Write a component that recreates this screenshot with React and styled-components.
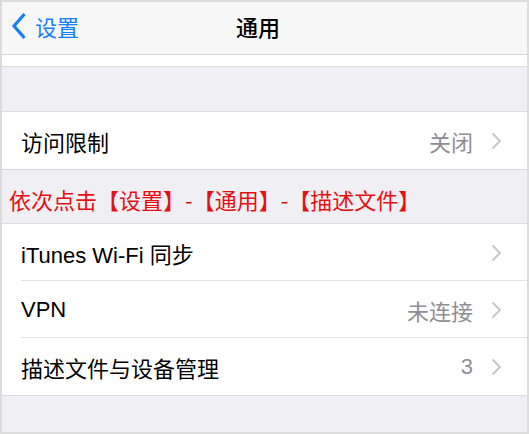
import React from "react";
import styled, { createGlobalStyle } from "styled-components";

const GlobalStyle = createGlobalStyle`
  html, body {
    margin: 0;
    padding: 0;
    background: #ffffff;
  }
  body {
    font-family: "Liberation Sans", "Noto Sans CJK SC", sans-serif;
  }
`;

const rows = [
  { label: "iTunes Wi-Fi 同步", value: "" },
  { label: "VPN", value: "未连接" },
  { label: "描述文件与设备管理", value: "3" },
];

export default function App() {
  return (
    <>
      <GlobalStyle />
      <Frame>
        <NavBar>
          <BackButton>
            <svg width="16" height="28" viewBox="0 0 16 28">
              <path
                d="M13.5 2 L3 14 L13.5 26"
                fill="none"
                stroke="#157efb"
                strokeWidth="3.2"
              />
            </svg>
            <span>设置</span>
          </BackButton>
          <Title>通用</Title>
          <NavSpacer />
        </NavBar>

        <ScrolledStrip />
        <SectionGap $height={44} />

        <Group>
          <Row>
            <Label>访问限制</Label>
            <Value>关闭</Value>
            <Chevron />
          </Row>
        </Group>

        <HintBand>依次点击【设置】-【通用】-【描述文件】</HintBand>

        <Group>
          {rows.map((row, i) => (
            <Row key={row.label} $divider={i < rows.length - 1}>
              <Label>{row.label}</Label>
              {row.value && <Value>{row.value}</Value>}
              <Chevron />
            </Row>
          ))}
        </Group>

        <SectionGap $fill />
      </Frame>
    </>
  );
}

function Chevron() {
  return (
    <ChevronIcon width="11" height="18" viewBox="0 0 11 18">
      <path d="M1.5 1.5 L9 9 L1.5 16.5" fill="none" stroke="#c7c7cc" strokeWidth="2" />
    </ChevronIcon>
  );
}

const Frame = styled.div`
  width: 529px;
  height: 434px;
  box-sizing: border-box;
  border: 2px solid #dcdcdc;
  background: #efeff4;
  display: flex;
  flex-direction: column;
  overflow: hidden;
`;

const NavBar = styled.div`
  height: 53px;
  box-sizing: border-box;
  padding-bottom: 5px;
  flex-shrink: 0;
  background: #f7f7f7;
  border-bottom: 1px solid #d4d4d4;
  display: grid;
  grid-template-columns: 1fr auto 1fr;
  align-items: center;
`;

const BackButton = styled.div`
  display: flex;
  align-items: center;
  gap: 8px;
  padding-left: 9px;
  color: #157efb;
  font-family: "Noto Sans CJK SC", sans-serif;
  font-size: 22px;
  svg {
    display: block;
  }
`;

const Title = styled.div`
  font-family: "Noto Sans CJK SC", sans-serif;
  font-size: 22px;
  font-weight: 500;
  color: #000;
  margin-right: 13px;
`;

const NavSpacer = styled.div``;

const ScrolledStrip = styled.div`
  height: 11px;
  flex-shrink: 0;
  background: #fff;
  border-bottom: 1px solid #dcdce0;
`;

const SectionGap = styled.div`
  flex-shrink: 0;
  height: ${(p) => (p.$height ? `${p.$height}px` : "auto")};
  flex-grow: ${(p) => (p.$fill ? 1 : 0)};
  background: #efeff4;
`;

const Group = styled.div`
  flex-shrink: 0;
  background: #fff;
  border-top: 1px solid #dcdce0;
  border-bottom: 1px solid #dcdce0;
`;

const Row = styled.div`
  height: 57px;
  box-sizing: border-box;
  display: flex;
  align-items: center;
  padding: 0 25px 0 19px;
  position: relative;
  ${(p) =>
    p.$divider &&
    `
    &::after {
      content: "";
      position: absolute;
      left: 19px;
      right: 0;
      bottom: 0;
      height: 1px;
      background: #e2e2e6;
    }
  `}
`;

const Label = styled.div`
  flex: 1;
  font-size: 22px;
  color: #000;
  white-space: nowrap;
`;

const Value = styled.div`
  font-size: 22px;
  color: #8e8e93;
  margin-right: 18px;
`;

const ChevronIcon = styled.svg`
  display: block;
  flex-shrink: 0;
`;

const HintBand = styled.div`
  height: 53px;
  flex-shrink: 0;
  box-sizing: border-box;
  padding: 4px 0 0 7px;
  display: flex;
  align-items: center;
  font-family: "Noto Sans CJK SC", sans-serif;
  font-size: 22px;
  color: #e60f12;
  white-space: nowrap;
`;
